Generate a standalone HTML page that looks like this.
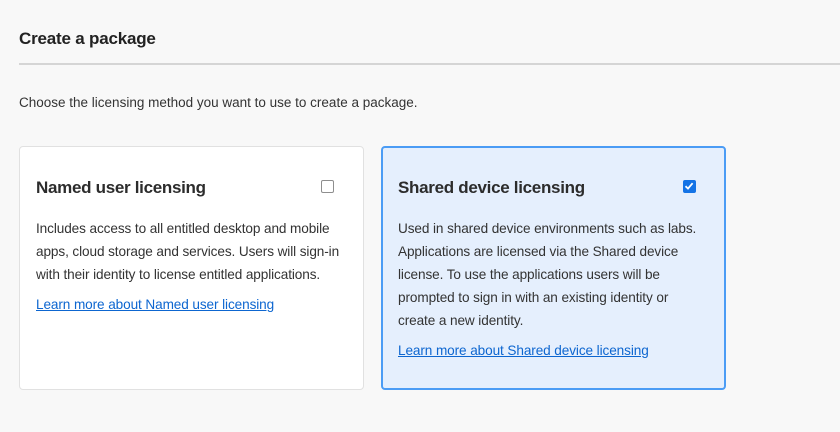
<!DOCTYPE html>
<html><head><meta charset="utf-8"><style>
*{margin:0;padding:0;box-sizing:border-box}
body{width:840px;height:432px;background:#f8f8f8;font-family:"Liberation Sans",sans-serif;color:#2c2c2c;position:relative;overflow:hidden}
.h{position:absolute;left:19px;top:29px;font-size:17px;font-weight:bold;color:#222;letter-spacing:-0.2px}
.line{position:absolute;left:19px;right:0;top:63px;height:2px;background:#d5d5d5}
.sub{position:absolute;left:19px;top:95px;font-size:13.5px;color:#333}
.card{position:absolute;top:146px;width:345px;height:244px;border:1px solid #e1e1e1;background:#fff;border-radius:4px}
.c2{left:381px;background:#e5effd;border:2px solid #4b9cf5}
.c1{left:19px}
.t{position:absolute;left:16px;top:31px;font-size:17px;font-weight:bold;color:#2c2c2c;letter-spacing:-0.3px}
.c2 .t{left:15px;top:30px}
.p{position:absolute;left:16px;top:70px;font-size:13.6px;line-height:23px;white-space:nowrap;letter-spacing:-0.1px;color:#333}
.c2 .p{left:15px;top:69px}
a{color:#0d66d0;text-decoration:underline;display:block;margin-top:7px}
.cb{position:absolute;left:301px;top:33px;width:13px;height:13px;border:1.5px solid #8e8e8e;border-radius:2px;background:#fff}
.c2 .cb{left:300px;top:32px;background:#1473e6;border-color:#1473e6}
</style></head><body>
<div class="h">Create a package</div>
<div class="line"></div>
<div class="sub">Choose the licensing method you want to use to create a package.</div>
<div class="card c1">
<div class="t">Named user licensing</div>
<div class="cb"></div>
<div class="p">Includes access to all entitled desktop and mobile<br>apps, cloud storage and services. Users will sign-in<br>with their identity to license entitled applications.<a>Learn more about Named user licensing</a></div>
</div>
<div class="card c2">
<div class="t">Shared device licensing</div>
<div class="cb"><svg width="10" height="10" viewBox="0 0 10 10" style="position:absolute;left:0;top:0"><path d="M1.5 5.2L4 7.6L8.6 2.2" stroke="#fff" stroke-width="1.8" fill="none"/></svg></div>
<div class="p">Used in shared device environments such as labs.<br>Applications are licensed via the Shared device<br>license. To use the applications users will be<br>prompted to sign in with an existing identity or<br>create a new identity.<a>Learn more about Shared device licensing</a></div>
</div>
</body></html>
